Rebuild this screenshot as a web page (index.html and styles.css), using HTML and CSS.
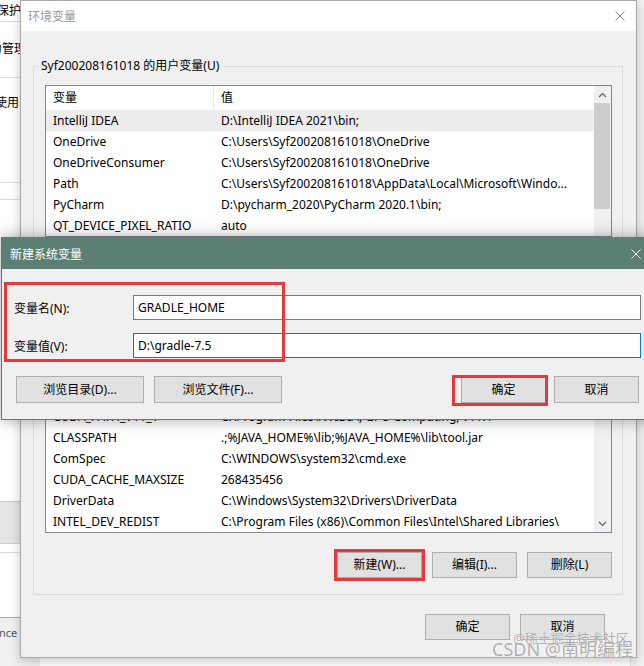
FILE: index.html
```html
<!DOCTYPE html>
<html>
<head>
  <meta charset="utf-8">
  <meta name="viewport" content="width=device-width, initial-scale=1">
  <title>新建系统变量</title>
  <link rel="stylesheet" href="styles.css">
</head>
<body>

<!-- window behind: 系统属性 -->
<div class="sysprop">
  <div class="sp-tab">系统保护</div>
  <div class="sp-text sp-admin">必须作为管理员</div>
  <div class="sp-line sp-line-1"></div>
  <div class="sp-text sp-perf">内存使用</div>
  <div class="sp-line sp-line-2"></div>
  <div class="sp-line sp-line-3"></div>
  <div class="sp-band"></div>
  <div class="sp-line sp-line-4"></div>
  <div class="sp-foot"><span>nce</span></div>
</div>
<div class="sidewin"></div>

<!-- 环境变量 -->
<div class="env">
  <div class="env-title">
    <span class="env-caption">环境变量</span>
    <span class="env-close">
      <svg width="10" height="10" viewBox="0 0 10 10"><path d="M0.5 0.5L9.5 9.5M9.5 0.5L0.5 9.5" stroke="#8a8a8a" stroke-width="1"/></svg>
    </span>
  </div>

  <div class="env-body">
    <fieldset class="group group-user">
      <legend>Syf200208161018 的用户变量(U)</legend>
      <div class="list list-user">
        <div class="lv">
          <div class="lv-head"><div class="c1">变量</div><div class="c2">值</div></div>
          <div class="lv-row sel"><div class="c1">IntelliJ IDEA</div><div class="c2">D:\IntelliJ IDEA 2021\bin;</div></div>
          <div class="lv-row"><div class="c1">OneDrive</div><div class="c2">C:\Users\Syf200208161018\OneDrive</div></div>
          <div class="lv-row"><div class="c1">OneDriveConsumer</div><div class="c2">C:\Users\Syf200208161018\OneDrive</div></div>
          <div class="lv-row"><div class="c1">Path</div><div class="c2">C:\Users\Syf200208161018\AppData\Local\Microsoft\Windo...</div></div>
          <div class="lv-row"><div class="c1">PyCharm</div><div class="c2">D:\pycharm_2020\PyCharm 2020.1\bin;</div></div>
          <div class="lv-row"><div class="c1">QT_DEVICE_PIXEL_RATIO</div><div class="c2">auto</div></div>
        </div>
        <div class="sb">
          <div class="sb-btn"><svg width="9" height="6" viewBox="0 0 9 6"><path d="M1 5L4.5 1.5L8 5" fill="none" stroke="#606060" stroke-width="1.2"/></svg></div>
          <div class="sb-thumb"></div>
        </div>
      </div>
      <div class="btn-row">
        <button class="btn">新建(N)...</button>
        <button class="btn">编辑(E)...</button>
        <button class="btn">删除(D)</button>
      </div>
    </fieldset>

    <fieldset class="group group-sys">
      <legend>系统变量(S)</legend>
      <div class="list list-sys">
        <div class="lv">
          <div class="lv-head"><div class="c1">变量</div><div class="c2">值</div></div>
          <div class="lv-row"><div class="c1">ALLUSERSPROFILE</div><div class="c2">C:\ProgramData</div></div>
          <div class="lv-row"><div class="c1">CATALINA_HOME</div><div class="c2">D:\apache-tomcat-9.0</div></div>
          <div class="lv-row"><div class="c1">CATALINA_BASE</div><div class="c2">D:\apache-tomcat-9.0</div></div>
          <div class="lv-row"><div class="c1">CUDA_PATH_V11_1</div><div class="c2">C:\Program Files\NVIDIA, GPU Computing, v11.1</div></div>
          <div class="lv-row"><div class="c1">CLASSPATH</div><div class="c2">.;%JAVA_HOME%\lib;%JAVA_HOME%\lib\tool.jar</div></div>
          <div class="lv-row"><div class="c1">ComSpec</div><div class="c2">C:\WINDOWS\system32\cmd.exe</div></div>
          <div class="lv-row"><div class="c1">CUDA_CACHE_MAXSIZE</div><div class="c2">268435456</div></div>
          <div class="lv-row"><div class="c1">DriverData</div><div class="c2">C:\Windows\System32\Drivers\DriverData</div></div>
          <div class="lv-row"><div class="c1">INTEL_DEV_REDIST</div><div class="c2">C:\Program Files (x86)\Common Files\Intel\Shared Libraries\</div></div>
        </div>
        <div class="sb">
          <div class="sb-btn"><svg width="9" height="6" viewBox="0 0 9 6"><path d="M1 5L4.5 1.5L8 5" fill="none" stroke="#606060" stroke-width="1.2"/></svg></div>
          <div class="sb-thumb sb-thumb-sys"></div>
          <div class="sb-track"></div>
          <div class="sb-btn"><svg width="9" height="6" viewBox="0 0 9 6"><path d="M1 1L4.5 4.5L8 1" fill="none" stroke="#606060" stroke-width="1.2"/></svg></div>
        </div>
      </div>
      <div class="btn-row">
        <button class="btn mark">新建(W)...</button>
        <button class="btn">编辑(I)...</button>
        <button class="btn">删除(L)</button>
      </div>
    </fieldset>

    <div class="env-foot">
      <button class="btn">确定</button>
      <button class="btn">取消</button>
    </div>
  </div>
</div>

<!-- 新建系统变量 -->
<div class="newvar">
  <div class="nv-title">
    <span>新建系统变量</span>
    <span class="nv-close">
      <svg width="10" height="10" viewBox="0 0 10 10"><path d="M0.5 0.5L9.5 9.5M9.5 0.5L0.5 9.5" stroke="#ffffff" stroke-width="1"/></svg>
    </span>
  </div>
  <div class="nv-body">
    <div class="nv-field">
      <label class="nv-label">变量名(N):</label>
      <div class="nv-input">GRADLE_HOME</div>
    </div>
    <div class="nv-field nv-field-2">
      <label class="nv-label">变量值(V):</label>
      <div class="nv-input focus">D:\gradle-7.5</div>
    </div>
    <div class="nv-buttons">
      <button class="btn wide">浏览目录(D)...</button>
      <button class="btn wide">浏览文件(F)...</button>
      <span class="grow"></span>
      <button class="btn">确定</button>
      <button class="btn">取消</button>
    </div>
  </div>
  <div class="redbox redbox-fields"></div>
  <div class="redbox redbox-ok"></div>
</div>

<div class="watermark">
  <span class="wm-top">@稀土掘金技术社区</span>
  <span class="wm-main">CSDN @南明编程</span>
</div>

</body>
</html>
```

FILE: styles.css
```css
html, body {
  margin: 0;
  padding: 0;
}

body {
  position: relative;
  width: 644px;
  height: 666px;
  overflow: hidden;
  background: #fff;
  font-family: "Noto Sans", "Noto Sans CJK SC", sans-serif;
  font-size: 12px;
  color: #000;
}

button {
  font-family: inherit;
  font-size: 12px;
  color: #000;
}

/* ---------- window behind ---------- */
.sysprop {
  position: absolute;
  left: -300px;
  top: 0;
  width: 340px;
  height: 666px;
  background: #fff;
  text-align: right;
  white-space: nowrap;
}

.sp-tab {
  height: 21px;
  line-height: 21px;
  padding-right: 19px;
  border-bottom: 1px solid #dadada;
}

.sp-text {
  height: 20px;
  line-height: 20px;
}

.sp-admin {
  margin-top: 17px;
  padding-right: 2px;
}

.sp-perf {
  margin-top: 15px;
  padding-right: 21px;
}

.sp-line {
  border-top: 1px solid #dcdcdc;
}

.sp-line-1 { margin-top: 18px; }
.sp-line-2 { margin-top: 69px; }
.sp-line-3 { margin-top: 16px; }

.sp-band {
  margin-top: 301px;
  height: 41px;
  background: #e5e5e5;
  border-top: 1px solid #c8c8c8;
  border-bottom: 1px solid #d0d0d0;
}

.sp-line-4 { margin-top: 8px; }

.sp-foot {
  margin-top: 64px;
  height: 60px;
  border-top: 1px solid #a8a8a8;
  background: #f0f0f0;
  text-align: left;
  padding-top: 7px;
  line-height: 16px;
  color: #555;
  font-size: 11px;
}

.sp-foot span {
  margin-left: 299px;
}

.sidewin {
  position: absolute;
  left: 630px;
  top: 0;
  width: 20px;
  height: 666px;
  background: #f2f2f2;
  border-left: 1px solid #e2e2e2;
}

/* ---------- 环境变量 dialog ---------- */
.env {
  position: absolute;
  left: 20px;
  top: 0;
  width: 617px;
  height: 658px;
  box-sizing: border-box;
  border: 1px solid #a9a9a9;
  background: #f0f0f0;
  box-shadow: 0 3px 10px rgba(0, 0, 0, 0.22);
}

.env-title {
  display: flex;
  align-items: center;
  justify-content: space-between;
  height: 30px;
  padding-left: 7px;
  background: #fff;
  color: #999;
}

.env-close {
  display: flex;
  align-items: center;
  justify-content: center;
  width: 32px;
  height: 30px;
}

.env-body {
  padding: 27px 13px 0 12px;
}

.group {
  margin: 0;
  width: 590px;
  box-sizing: border-box;
  min-width: 0;
  padding: 11px 10px 16px 11px;
  border: 1px solid #dcdcdc;
}

.group legend {
  padding: 0 2px;
  margin-left: -6px;
  line-height: 16px;
}

.group-user {
  padding-bottom: 8px;
}

.group-user .btn-row {
  margin-top: 10px;
}

.group-sys {
  margin-top: 9px;
}

.list {
  display: flex;
  box-sizing: border-box;
  border: 1px solid #828790;
  background: #fff;
}

.list-user { height: 152px; }
.list-sys { height: 215px; }

.lv {
  flex: 1;
  overflow: hidden;
  white-space: nowrap;
}

.lv-head,
.lv-row {
  display: flex;
}

.lv-head {
  height: 24px;
  line-height: 24px;
}

.lv-row {
  height: 21px;
  line-height: 21px;
}

.lv-row.sel {
  background: #ededed;
}

.c1 {
  width: 168px;
  flex: none;
  box-sizing: border-box;
  padding-left: 7px;
  overflow: hidden;
}

.lv-head .c1 {
  border-right: 1px solid #e5e5e5;
}

.c2 {
  padding-left: 7px;
}

.sb {
  width: 17px;
  flex: none;
  display: flex;
  flex-direction: column;
  background: #f0f0f0;
}

.sb-btn {
  height: 17px;
  display: flex;
  align-items: center;
  justify-content: center;
}

.sb-thumb {
  height: 106px;
  margin-right: 1px;
  background: #cdcdcd;
}

.sb-thumb-sys {
  height: 40px;
}

.sb-track {
  flex: 1;
}

.btn-row {
  display: flex;
  justify-content: flex-end;
  gap: 10px;
  margin-top: 19px;
}

.btn {
  width: 85px;
  height: 26px;
  padding: 0;
  box-sizing: border-box;
  border: 1px solid #adadad;
  background: #e1e1e1;
  line-height: 24px;
}

.btn.mark {
  outline: 3px solid #e53a3d;
  outline-offset: 0;
}

.env-foot {
  display: flex;
  justify-content: flex-end;
  gap: 10px;
  margin-top: 19px;
  padding-right: 18px;
}

/* ---------- 新建系统变量 dialog ---------- */
.newvar {
  position: absolute;
  left: 1px;
  top: 237px;
  width: 659px;
  height: 183px;
  box-sizing: border-box;
  border: 1px solid #5b7f72;
  background: #f0f0f0;
  box-shadow: 0 0 14px rgba(0, 0, 0, 0.35);
}

.nv-title {
  display: flex;
  align-items: center;
  justify-content: space-between;
  height: 31px;
  padding-left: 8px;
  background: #5b7f72;
  color: #fff;
}

.nv-close {
  display: flex;
  align-items: center;
  justify-content: center;
  width: 46px;
  height: 31px;
}

.nv-body {
  padding: 26px 18px 0 12px;
}

.nv-field {
  display: flex;
  align-items: center;
  height: 25px;
}

.nv-field-2 {
  margin-top: 13px;
}

.nv-label {
  width: 119px;
  flex: none;
}

.nv-input {
  flex: 1;
  height: 25px;
  box-sizing: border-box;
  border: 1px solid #7a7a7a;
  background: #fff;
  padding-left: 4px;
  line-height: 23px;
}

.nv-input.focus {
  border-color: #0078d7;
}

.nv-buttons {
  display: flex;
  gap: 8px;
  margin-top: 18px;
  padding: 0 2px;
}

.nv-buttons .btn {
  height: 27px;
  line-height: 25px;
}

.nv-buttons .wide {
  width: 128px;
}

.nv-buttons .wide + .wide {
  margin-left: 2px;
}

.grow {
  flex: 1;
}

.redbox {
  position: absolute;
  box-sizing: border-box;
  border: 3px solid #e53a3d;
}

.redbox-fields {
  left: 2px;
  top: 44px;
  width: 281px;
  height: 80px;
}

.redbox-ok {
  left: 450px;
  top: 137px;
  width: 96px;
  height: 31px;
}

/* ---------- watermark ---------- */
.watermark {
  position: absolute;
  left: 490px;
  top: 628px;
  width: 150px;
  height: 34px;
  color: rgba(120, 120, 120, 0.6);
  text-shadow: 0 0 1px #fff;
  white-space: nowrap;
}

.wm-top {
  position: absolute;
  left: 23px;
  top: 2px;
  font-size: 13px;
  line-height: 16px;
}

.wm-main {
  position: absolute;
  left: 2px;
  top: 10px;
  font-size: 18px;
  line-height: 22px;
}
```
